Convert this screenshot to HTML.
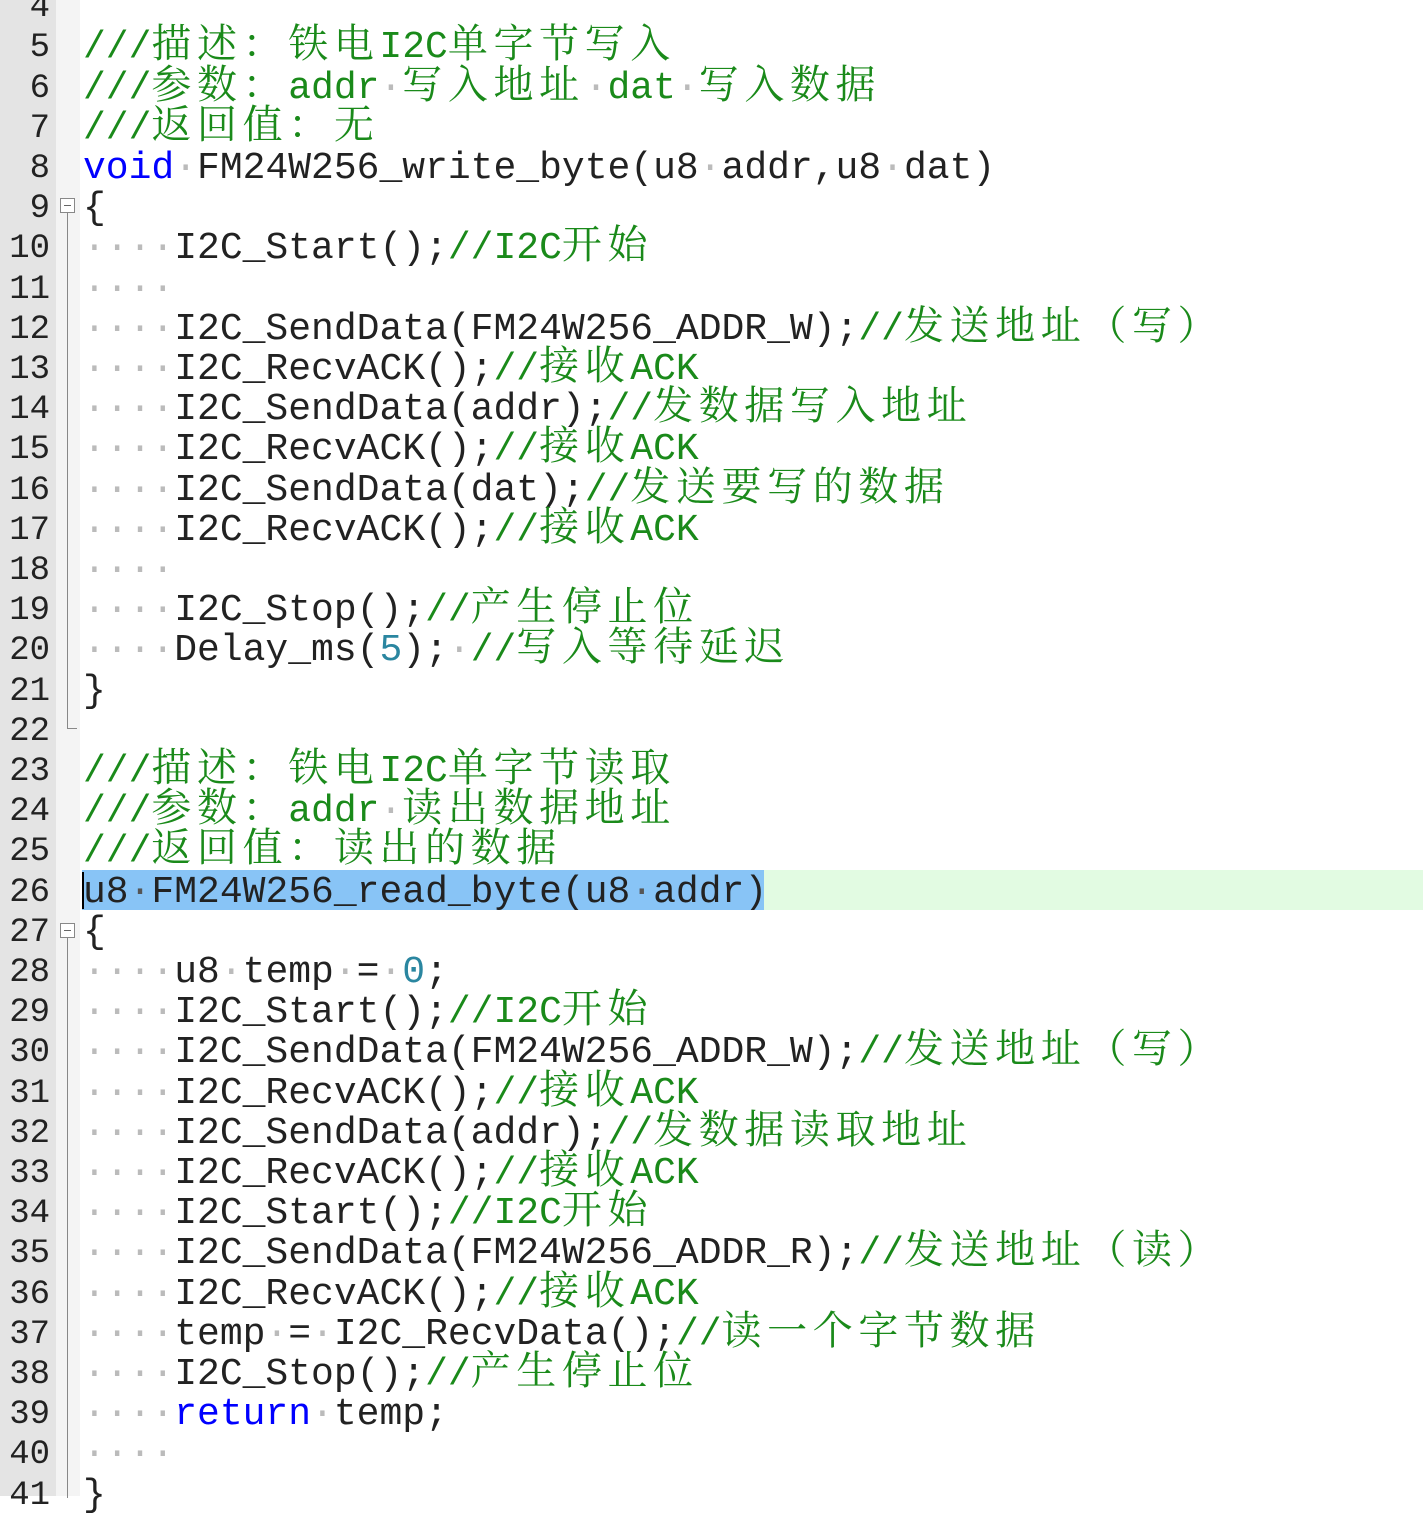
<!DOCTYPE html>
<html><head><meta charset="utf-8"><style>
body{margin:0;width:1423px;height:1496px;overflow:hidden;background:#fff;position:relative;font-family:"Liberation Mono",monospace;}
#ln{position:absolute;left:0;top:0;width:56px;height:1496px;background:#e4e4e4;}
#fm{position:absolute;left:56px;top:0;width:24px;height:1496px;background:#f4f4f4;}
.l{position:absolute;left:0;height:40.2px;line-height:40.2px;white-space:pre;font-size:38px;color:#222;}
.num{position:absolute;left:0;width:50px;text-align:right;font-size:34px;color:#222;height:40.2px;line-height:40.2px;}
.code{position:absolute;left:83px;line-height:40.2px;}
.k{color:#0000ff}.g{color:#1a8a1a}.n{color:#2a86a0}.d{color:#bbb}
.c{font-family:"Noto Serif CJK SC","Noto Sans CJK SC",serif;font-size:40px;letter-spacing:5.6px;line-height:0;}
.box{position:absolute;left:60px;width:15px;height:15px;border:1px solid #888;background:#fff;box-sizing:border-box;}
.box:after{content:"";position:absolute;left:3px;right:3px;top:6px;height:1px;background:#666;}
.vl{position:absolute;left:67px;width:1px;background:#888;}
</style></head><body>
<div id="ln"></div><div id="fm"></div>
<div style="position:absolute;left:82px;top:870px;width:1341px;height:40.2px;background:#e2fbe2"></div>
<div style="position:absolute;left:82px;top:870px;width:682px;height:40.2px;background:#88c4f6"></div>
<div style="position:absolute;left:82px;top:872px;width:2px;height:37px;background:#000"></div>
<div style="position:absolute;left:0;top:-11.8px;width:1423px;">
<div class="l" style="top:0px"><span class="num">4</span></div>
<div class="l" style="top:40.2px"><span class="num">5</span><span class="code g">///<span class="c">描述：铁电</span>I2C<span class="c">单字节写入</span></span></div>
<div class="l" style="top:80.4px"><span class="num">6</span><span class="code g">///<span class="c">参数：</span>addr<span class="d">·</span><span class="c">写入地址</span><span class="d">·</span>dat<span class="d">·</span><span class="c">写入数据</span></span></div>
<div class="l" style="top:120.6px"><span class="num">7</span><span class="code g">///<span class="c">返回值：无</span></span></div>
<div class="l" style="top:160.8px"><span class="num">8</span><span class="code"><span class="k">void</span><span class="d">·</span>FM24W256_write_byte(u8<span class="d">·</span>addr,u8<span class="d">·</span>dat)</span></div>
<div class="l" style="top:201px"><span class="num">9</span><span class="code">{</span></div>
<div class="l" style="top:241.2px"><span class="num">10</span><span class="code"><span class="d">····</span>I2C_Start();<span class="g">//I2C<span class="c">开始</span></span></span></div>
<div class="l" style="top:281.4px"><span class="num">11</span><span class="code"><span class="d">····</span></span></div>
<div class="l" style="top:321.6px"><span class="num">12</span><span class="code"><span class="d">····</span>I2C_SendData(FM24W256_ADDR_W);<span class="g">//<span class="c">发送地址（写）</span></span></span></div>
<div class="l" style="top:361.8px"><span class="num">13</span><span class="code"><span class="d">····</span>I2C_RecvACK();<span class="g">//<span class="c">接收</span>ACK</span></span></div>
<div class="l" style="top:402px"><span class="num">14</span><span class="code"><span class="d">····</span>I2C_SendData(addr);<span class="g">//<span class="c">发数据写入地址</span></span></span></div>
<div class="l" style="top:442.2px"><span class="num">15</span><span class="code"><span class="d">····</span>I2C_RecvACK();<span class="g">//<span class="c">接收</span>ACK</span></span></div>
<div class="l" style="top:482.4px"><span class="num">16</span><span class="code"><span class="d">····</span>I2C_SendData(dat);<span class="g">//<span class="c">发送要写的数据</span></span></span></div>
<div class="l" style="top:522.6px"><span class="num">17</span><span class="code"><span class="d">····</span>I2C_RecvACK();<span class="g">//<span class="c">接收</span>ACK</span></span></div>
<div class="l" style="top:562.8px"><span class="num">18</span><span class="code"><span class="d">····</span></span></div>
<div class="l" style="top:603px"><span class="num">19</span><span class="code"><span class="d">····</span>I2C_Stop();<span class="g">//<span class="c">产生停止位</span></span></span></div>
<div class="l" style="top:643.2px"><span class="num">20</span><span class="code"><span class="d">····</span>Delay_ms(<span class="n">5</span>);<span class="d">·</span><span class="g">//<span class="c">写入等待延迟</span></span></span></div>
<div class="l" style="top:683.4px"><span class="num">21</span><span class="code">}</span></div>
<div class="l" style="top:723.6px"><span class="num">22</span></div>
<div class="l" style="top:763.8px"><span class="num">23</span><span class="code g">///<span class="c">描述：铁电</span>I2C<span class="c">单字节读取</span></span></div>
<div class="l" style="top:804px"><span class="num">24</span><span class="code g">///<span class="c">参数：</span>addr<span class="d">·</span><span class="c">读出数据地址</span></span></div>
<div class="l" style="top:844.2px"><span class="num">25</span><span class="code g">///<span class="c">返回值：读出的数据</span></span></div>
<div class="l" style="top:884.4px"><span class="num">26</span><span class="code">u8<span class="d" style="color:#555">·</span>FM24W256_read_byte(u8<span class="d" style="color:#555">·</span>addr)</span></div>
<div class="l" style="top:924.6px"><span class="num">27</span><span class="code">{</span></div>
<div class="l" style="top:964.8px"><span class="num">28</span><span class="code"><span class="d">····</span>u8<span class="d">·</span>temp<span class="d">·</span>=<span class="d">·</span><span class="n">0</span>;</span></div>
<div class="l" style="top:1005px"><span class="num">29</span><span class="code"><span class="d">····</span>I2C_Start();<span class="g">//I2C<span class="c">开始</span></span></span></div>
<div class="l" style="top:1045.2px"><span class="num">30</span><span class="code"><span class="d">····</span>I2C_SendData(FM24W256_ADDR_W);<span class="g">//<span class="c">发送地址（写）</span></span></span></div>
<div class="l" style="top:1085.4px"><span class="num">31</span><span class="code"><span class="d">····</span>I2C_RecvACK();<span class="g">//<span class="c">接收</span>ACK</span></span></div>
<div class="l" style="top:1125.6px"><span class="num">32</span><span class="code"><span class="d">····</span>I2C_SendData(addr);<span class="g">//<span class="c">发数据读取地址</span></span></span></div>
<div class="l" style="top:1165.8px"><span class="num">33</span><span class="code"><span class="d">····</span>I2C_RecvACK();<span class="g">//<span class="c">接收</span>ACK</span></span></div>
<div class="l" style="top:1206px"><span class="num">34</span><span class="code"><span class="d">····</span>I2C_Start();<span class="g">//I2C<span class="c">开始</span></span></span></div>
<div class="l" style="top:1246.2px"><span class="num">35</span><span class="code"><span class="d">····</span>I2C_SendData(FM24W256_ADDR_R);<span class="g">//<span class="c">发送地址（读）</span></span></span></div>
<div class="l" style="top:1286.4px"><span class="num">36</span><span class="code"><span class="d">····</span>I2C_RecvACK();<span class="g">//<span class="c">接收</span>ACK</span></span></div>
<div class="l" style="top:1326.6px"><span class="num">37</span><span class="code"><span class="d">····</span>temp<span class="d">·</span>=<span class="d">·</span>I2C_RecvData();<span class="g">//<span class="c">读一个字节数据</span></span></span></div>
<div class="l" style="top:1366.8px"><span class="num">38</span><span class="code"><span class="d">····</span>I2C_Stop();<span class="g">//<span class="c">产生停止位</span></span></span></div>
<div class="l" style="top:1407px"><span class="num">39</span><span class="code"><span class="d">····</span><span class="k">return</span><span class="d">·</span>temp;</span></div>
<div class="l" style="top:1447.2px"><span class="num">40</span><span class="code"><span class="d">····</span></span></div>
<div class="l" style="top:1487.4px"><span class="num">41</span><span class="code">}</span></div>
</div>
<div class="box" style="top:198px"></div>
<div class="vl" style="top:213px;height:516px"></div>
<div style="position:absolute;left:67px;top:728px;width:10px;height:1px;background:#888"></div>
<div class="box" style="top:923px"></div>
<div class="vl" style="top:938px;height:560px"></div>
</body></html>
